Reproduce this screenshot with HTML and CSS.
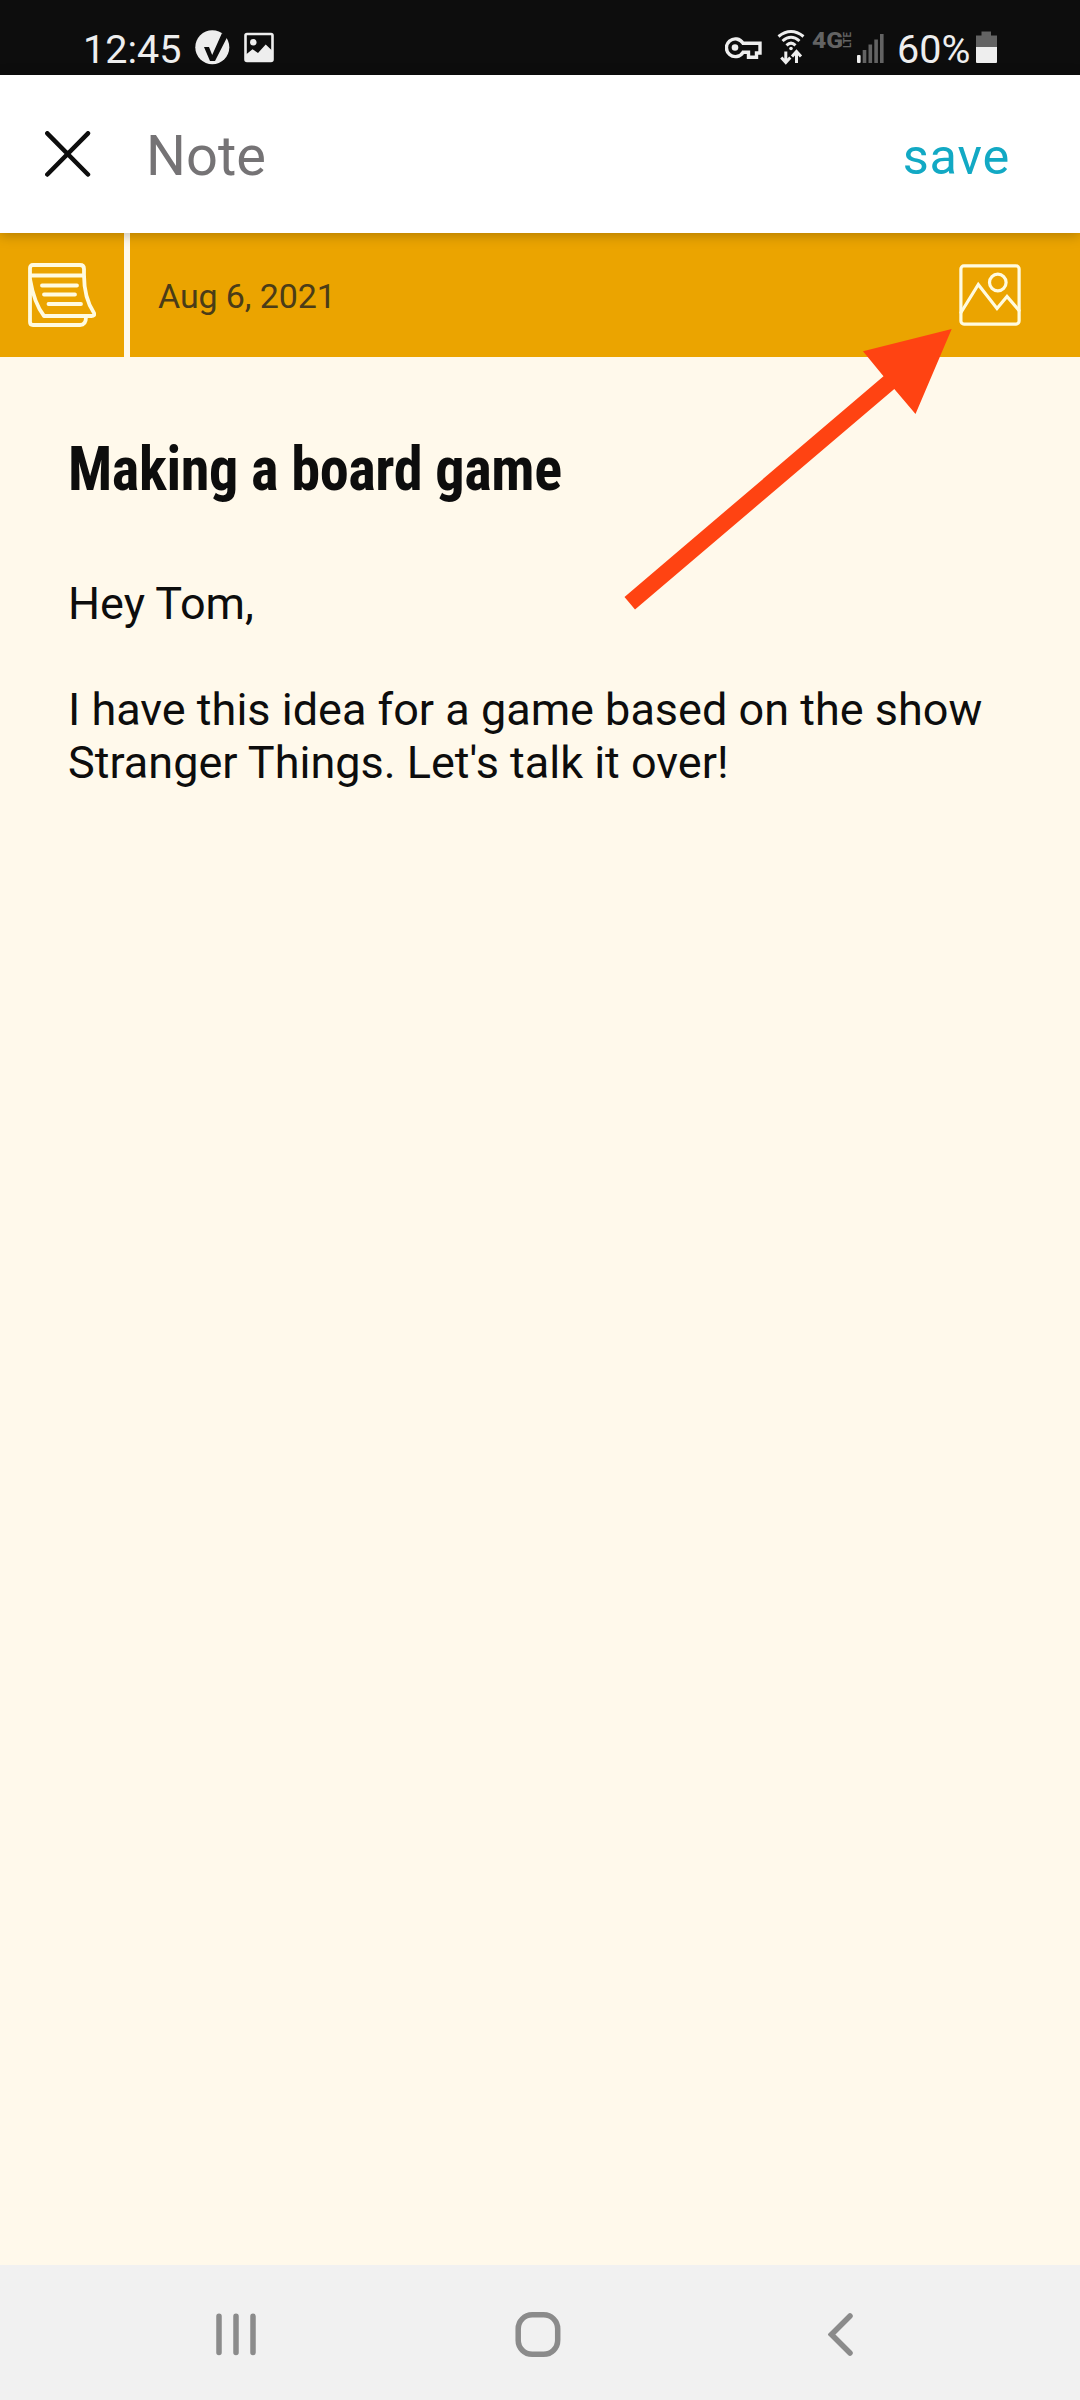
FILE: index.html
```html
<!DOCTYPE html>
<html lang="en">

<head>
    <meta charset="UTF-8">
    <meta name="viewport" content="width=device-width, initial-scale=1.0">
    <title>Note</title>
    <link rel="stylesheet" href="styles.css">
</head>

<body>
    <div class="status-bar">
        <span class="clock">12:45</span>
        <svg class="icon-check" width="35" height="40" viewBox="0 0 35 40">
            <circle cx="17.3" cy="19.3" r="17" fill="#eee"/>
            <path d="M9 19h5l3.2 8L27 5l5.5 3.5L20 33h-5z" fill="#0d0d0d"/>
        </svg>
        <svg class="icon-picture" width="30" height="40" viewBox="0 0 30 40">
            <rect x="1.5" y="6" width="27" height="27" rx="1.5" fill="none" stroke="#eee" stroke-width="2.6"/>
            <circle cx="9.3" cy="14.3" r="3.2" fill="#eee"/>
            <path d="M2 26.5l6.5-5.2 5.5 3.6 7.7-8.4 6.3 6V33H2z" fill="#eee"/>
        </svg>
        <div class="status-right">
            <svg class="icon-key" width="38" height="40" viewBox="0 0 38 40">
                <path d="M18 15.2H35V25h-3.5v4.2h-8v-4.9H18A8.9 8.9 0 1 1 18 15.2z" fill="none" stroke="#eee" stroke-width="3.4"/>
                <circle cx="10" cy="19.5" r="3.3" fill="#eee"/>
            </svg>
            <svg class="icon-wifi" width="28" height="40" viewBox="0 0 28 40">
                <g fill="none" stroke="#eee" stroke-width="3">
                    <path d="M1.5 8.5Q14-1.5 26.5 8.5"/>
                    <path d="M5.5 13Q14 5.5 22.5 13"/>
                    <path d="M9.5 17.3Q14 13 18.5 17.3"/>
                    <path d="M8.8 23.5V34M4.3 29.5l4.5 5 4.5-5M19.5 35V24M15 28.5l4.5-5 4.5 5"/>
                </g>
                <circle cx="14" cy="20.5" r="1.8" fill="#eee"/>
            </svg>
            <svg class="icon-network" width="40" height="40" viewBox="0 0 40 40">
                <text class="net-type" x="0" y="20" textLength="31" lengthAdjust="spacingAndGlyphs">4G</text>
                <text class="net-lte" transform="translate(38.5 20) rotate(-90)" textLength="16" lengthAdjust="spacingAndGlyphs">LTE</text>
            </svg>
            <svg class="icon-signal" width="27" height="40" viewBox="0 0 27 40">
                <rect x="0" y="27" width="3.6" height="8" rx="1" fill="#eee"/>
                <g fill="#636363">
                    <rect x="5.7" y="22" width="3.6" height="13"/>
                    <rect x="11.5" y="16.5" width="3.6" height="18.5"/>
                    <rect x="17.3" y="11.5" width="3.6" height="23.5"/>
                    <rect x="23" y="6" width="3.6" height="29"/>
                </g>
            </svg>
            <span class="percent">60%</span>
            <svg class="icon-battery" width="21" height="40" viewBox="0 0 21 40">
                <path d="M0 19V7.5h5.5v-4H15v4h6V19z" fill="#636363"/>
                <path d="M0 19h21v15a1 1 0 0 1-1 1H1a1 1 0 0 1-1-1z" fill="#eee"/>
            </svg>
        </div>
    </div>

    <header class="toolbar">
        <svg class="close" width="46" height="46" viewBox="0 0 46 46">
            <path d="M2.3 2.3L43 43.5M43 2.3L2.3 43.5"/>
        </svg>
        <h1>Note</h1>
        <a class="save">save</a>
    </header>

    <div class="date-strip">
        <div class="note-type">
            <svg width="68" height="64" viewBox="0 0 68 64">
                <path d="M2 12V59q0 3 3 3H52q6 0 6-8M2 12V5q0-3 3-3H52q4 0 4 4v6c0 17 4 29 10 38q1 3-2.5 3H16Q6 40 2 16M2 12.5H56"/>
                <path d="M14 22.5H49M16 31.5H47M20.5 41H53"/>
            </svg>
        </div>
        <span class="date">Aug 6, 2021</span>
        <svg class="add-image" width="62" height="62" viewBox="0 0 62 62">
            <rect x="1.9" y="1.9" width="58.2" height="58.2" rx="3"/>
            <circle cx="38.8" cy="18.5" r="8.3"/>
            <path d="M2 48.5L19.3 20.5 38 44.5 48 32.5 60 46.5"/>
        </svg>
    </div>

    <main class="note">
        <h2>Making a board game</h2>
        <p>Hey Tom,</p>
        <p>I have this idea for a game based on the show Stranger Things. Let's talk it over!</p>
    </main>

    <nav class="nav-bar">
        <svg class="recents" width="40" height="46" viewBox="0 0 40 46">
            <path d="M3 4.3V40.5M20 4.3V40.5M37 4.3V40.5"/>
        </svg>
        <svg class="home" width="46" height="46" viewBox="0 0 46 46">
            <rect x="3.2" y="2.8" width="39.5" height="39.5" rx="14"/>
        </svg>
        <svg class="back" width="26" height="46" viewBox="0 0 26 46">
            <path d="M22 4L3.5 22.5 22 41"/>
        </svg>
    </nav>

    <svg class="arrow" width="330" height="284" viewBox="0 0 330 284">
        <path d="M327.7 3L239 25.3 259.5 50.3 0.5 271 11 283.5 270.3 63 291.5 88z"/>
    </svg>
</body>

</html>
```

FILE: styles.css
```css
* {
    box-sizing: border-box;
}

body {
    font-family: Roboto, sans-serif;
    margin: 0;
    width: 1080px;
    height: 2400px;
    display: flex;
    flex-direction: column;
    background-color: #fff9eb;
    color: #0d0d0d;
    position: relative;
}

svg {
    display: block;
    flex: none;
}

/* Status bar */
.status-bar {
    height: 75px;
    padding: 21px 83px 0 83px;
    display: flex;
    align-items: center;
    background: #0d0d0d;
    color: #eee;
    font-size: 39.5px;
    line-height: 52px;
}

.clock {
    width: 112px;
    padding-top: 3px;
}

.icon-picture {
    margin-left: 14px;
}

.status-right {
    margin-left: auto;
    display: flex;
    align-items: center;
}

.icon-wifi {
    margin-left: 14px;
}

.icon-network {
    margin-left: 7px;
    fill: #636363;
}

.net-type {
    font-size: 22px;
    font-weight: 800;
}

.net-lte {
    font-size: 10px;
    font-weight: 700;
}

.icon-signal {
    margin-left: 5px;
}

.percent {
    margin-left: 13px;
    width: 79px;
    padding-top: 3px;
}

/* Toolbar */
.toolbar {
    height: 158px;
    padding: 0 70px 0 45px;
    display: flex;
    align-items: center;
    background: #fff;
    box-shadow: 0 2px 12px rgba(0, 0, 0, 0.25);
    position: relative;
}

.close {
    fill: none;
    stroke: #0d0d0d;
    stroke-width: 4.5;
    stroke-linecap: round;
}

.toolbar h1 {
    margin: 3px 0 0 55px;
    font-size: 56px;
    font-weight: 400;
    color: #757375;
}

.save {
    margin: 5px 0 0 auto;
    font-size: 50.5px;
    letter-spacing: 0.8px;
    color: #12a9c4;
}

/* Date strip */
.date-strip {
    height: 124px;
    padding-right: 59px;
    display: flex;
    align-items: center;
    background: #eba400;
}

.date-strip svg {
    fill: none;
    stroke: #fffbe0;
    stroke-width: 3.8;
    stroke-linecap: round;
    stroke-linejoin: round;
}

.date-strip .add-image {
    margin-left: auto;
    stroke-width: 3.2;
    stroke-linejoin: miter;
}

.note-type {
    width: 130px;
    height: 124px;
    padding: 30px 0 0 28px;
    border-right: 6px solid #fff9eb;
}

.date {
    padding: 1px 0 0 28px;
    font-size: 34px;
    letter-spacing: -0.1px;
    color: #4a3c18;
}

/* Note body */
.note {
    flex: 1;
    padding: 75px 68px 0 68px;
}

.note h2 {
    margin: 0 0 71px;
    font-family: "Roboto Condensed", Roboto, sans-serif;
    font-stretch: 75%;
    font-size: 62px;
    line-height: 74px;
    font-weight: 750;
    letter-spacing: -0.4px;
    transform: scaleX(0.94);
    transform-origin: left;
}

.note p {
    margin: 0 0 53px;
    font-size: 45px;
    line-height: 53px;
}

/* Navigation bar */
.nav-bar {
    height: 135px;
    padding: 4px 226px 0 216px;
    display: flex;
    align-items: center;
    justify-content: space-between;
    background: #f1f1f1;
}

.nav-bar svg {
    fill: none;
    stroke: #8b8b8b;
    stroke-width: 5.5;
    stroke-linecap: round;
}

.nav-bar .home {
    margin-right: 8px;
}

/* Pointer over the add image button */
.arrow {
    position: absolute;
    left: 624px;
    top: 326px;
    fill: #ff4312;
}
```
